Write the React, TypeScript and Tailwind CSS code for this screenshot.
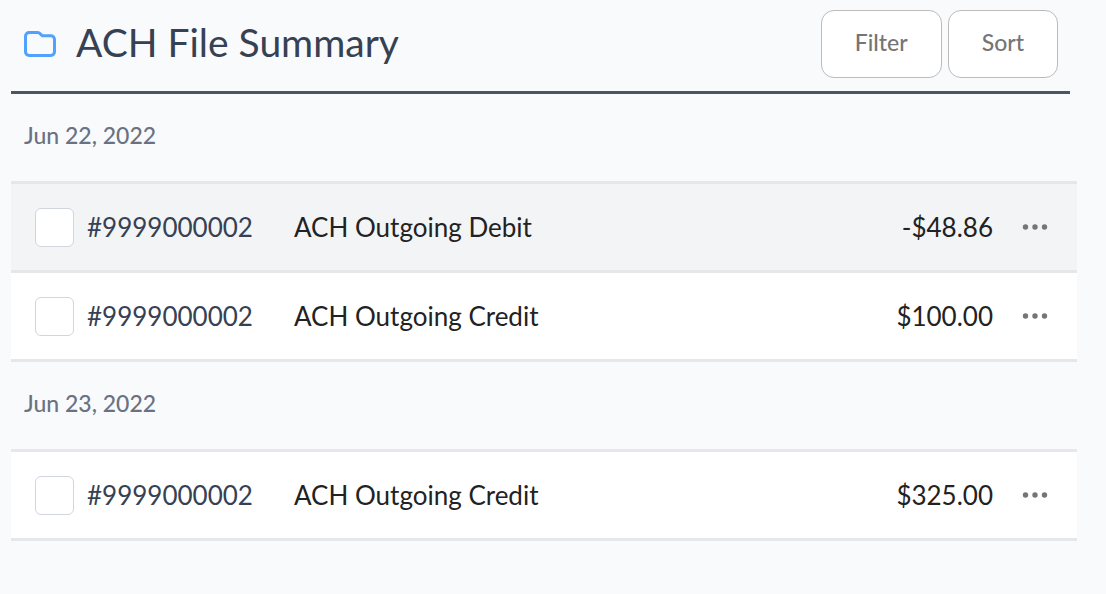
type Transaction = {
  id: string
  trace: string
  description: string
  amount: string
  active?: boolean
}

type Group = {
  date: string
  transactions: Transaction[]
}

const groups: Group[] = [
  {
    date: 'Jun 22, 2022',
    transactions: [
      { id: 'a', trace: '#9999000002', description: 'ACH Outgoing Debit', amount: '-$48.86', active: true },
      { id: 'b', trace: '#9999000002', description: 'ACH Outgoing Credit', amount: '$100.00' },
    ],
  },
  {
    date: 'Jun 23, 2022',
    transactions: [{ id: 'c', trace: '#9999000002', description: 'ACH Outgoing Credit', amount: '$325.00' }],
  },
]

function FolderIcon() {
  return (
    <svg aria-hidden className="h-[26px] w-8 shrink-0 text-blue-400" viewBox="0 0 32 26" fill="none">
      <path
        d="M1.5 5.2V20.8A3.6 3.6 0 0 0 5.1 24.4H26.9A3.6 3.6 0 0 0 30.5 20.8V8.4A3.6 3.6 0 0 0 26.9 4.8H18.2L16 2.6A3 3 0 0 0 13.8 1.6H5.1A3.6 3.6 0 0 0 1.5 5.2Z"
        stroke="currentColor"
        strokeWidth="3"
        strokeLinejoin="round"
      />
    </svg>
  )
}

function DotsIcon() {
  return (
    <svg aria-hidden className="h-[6px] w-[26px]" viewBox="0 0 26 6" fill="currentColor">
      <circle cx="3.5" cy="3" r="2.7" />
      <circle cx="13" cy="3" r="2.7" />
      <circle cx="22.5" cy="3" r="2.7" />
    </svg>
  )
}

function HeaderButton({ label }: { label: string }) {
  return (
    <button
      type="button"
      className="h-[68px] rounded-[13px] border border-[#bbbbbb] bg-white px-[33px] pb-1 text-[23px] font-medium text-[#757575]"
    >
      {label}
    </button>
  )
}

function TransactionRow({ transaction }: { transaction: Transaction }) {
  const { id, trace, description, amount, active } = transaction
  return (
    <tr className={`*:border-b-3 *:border-gray-200 ${active ? 'bg-gray-100' : 'bg-white'}`}>
      <td className="h-[89px] w-[76px] pl-6">
        <input
          id={id}
          type="checkbox"
          aria-label={`Select ${description} ${amount}`}
          className="block size-[39px] appearance-none rounded-md border border-gray-300 bg-white checked:bg-blue-400"
        />
      </td>
      <td className="w-[207px] text-[26px] text-gray-700">
        <label htmlFor={id}>{trace}</label>
      </td>
      <td className="text-[26px] text-[#222222]">{description}</td>
      <td className="text-right text-[26px] text-[#222222]">{amount}</td>
      <td className="w-[84px] pl-[29px]">
        <button type="button" aria-label="More actions" className="flex h-10 items-center text-[#757575]">
          <DotsIcon />
        </button>
      </td>
    </tr>
  )
}

export default function App() {
  return (
    <main className="min-h-screen bg-[#f9fafc] pr-[29px] pl-[11px] font-['Lato',sans-serif]">
      <header className="mr-[7px] flex items-center justify-between border-b-3 border-gray-600 pt-[10px] pr-3 pb-[13px] pl-[13px]">
        <div className="flex items-center gap-5">
          <FolderIcon />
          <h1 className="pb-1 text-[39px] leading-none text-gray-700">ACH File Summary</h1>
        </div>
        <div className="flex gap-[6px]">
          <HeaderButton label="Filter" />
          <HeaderButton label="Sort" />
        </div>
      </header>

      <table className="w-full border-separate border-spacing-0">
        {groups.map((group) => (
          <tbody key={group.date}>
            <tr>
              <th
                scope="rowgroup"
                colSpan={5}
                className="h-[90px] border-b-3 border-gray-200 pb-1 pl-[13px] text-left text-[23px] font-medium text-gray-500"
              >
                {group.date}
              </th>
            </tr>
            {group.transactions.map((transaction) => (
              <TransactionRow key={transaction.id} transaction={transaction} />
            ))}
          </tbody>
        ))}
      </table>
    </main>
  )
}
